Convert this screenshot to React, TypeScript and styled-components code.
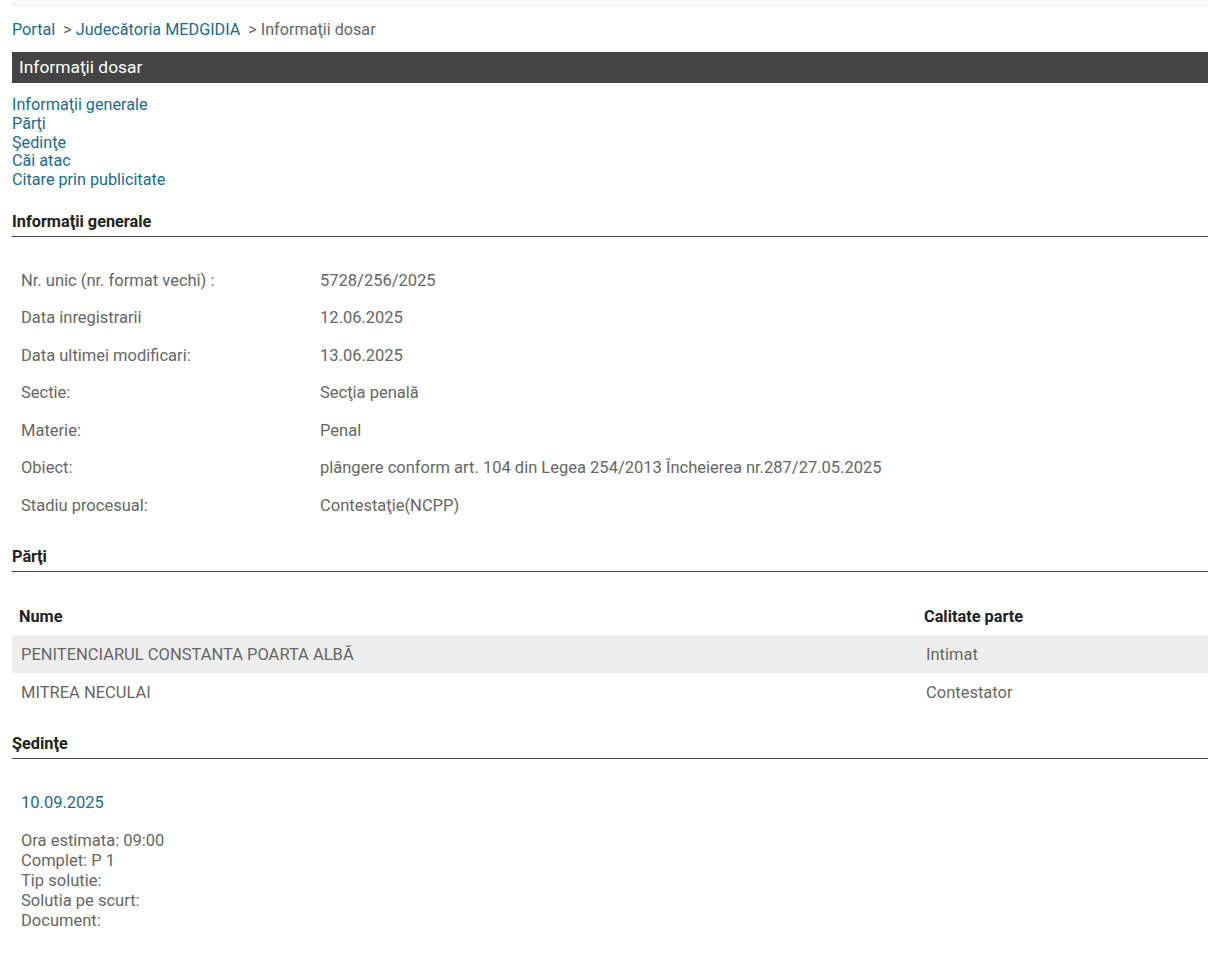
import styled, { createGlobalStyle } from 'styled-components';

const GlobalStyle = createGlobalStyle`
  body {
    margin: 0;
    background: #fff;
    font-family: Roboto, 'Liberation Sans', sans-serif;
    font-size: 16.5px;
    color: #666;
  }
`;

const Page = styled.div`
  padding: 0 12px 40px;
`;

const TopStrip = styled.div`
  height: 7px;
  background: #f7f7f7;
`;

const Breadcrumb = styled.div`
  margin-top: 13px;
  font-size: 16.2px;
  line-height: 19px;
  color: #666;
`;

const Link = styled.a`
  color: #1d6a8d;
  text-decoration: none;
`;

const Sep = styled.span`
  margin-left: 8px;
  margin-right: 4px;
`;

const HeaderBar = styled.div`
  margin-top: 13px;
  height: 31px;
  background: #444;
  color: #fff;
  font-size: 17.4px;
  line-height: 31px;
  padding: 0 7px;
`;

const NavList = styled.div`
  margin-top: 13px;
  display: flex;
  flex-direction: column;
  font-size: 16.2px;
  line-height: 18.75px;
`;

const SectionTitle = styled.div<{ $top: number }>`
  margin-top: ${(p) => p.$top}px;
  font-weight: 700;
  font-size: 16.3px;
  color: #222;
  line-height: 18px;
  padding-bottom: 5px;
  border-bottom: 1px solid #444;
`;

const InfoTable = styled.div`
  margin-top: 25px;
  display: grid;
  grid-template-columns: 299px 1fr;
`;

const InfoCell = styled.div`
  padding: 9px 9px;
  line-height: 19.5px;
`;

const PartiTable = styled.div`
  margin-top: 25px;
  display: flex;
  flex-direction: column;
`;

const PartiRow = styled.div<{ $shade?: boolean; $head?: boolean }>`
  display: grid;
  grid-template-columns: 905px 1fr;
  height: 38px;
  align-items: center;
  background: ${(p) => (p.$shade ? '#eeeeee' : 'transparent')};
  font-weight: ${(p) => (p.$head ? 700 : 400)};
  color: ${(p) => (p.$head ? '#222' : '#666')};
  font-size: ${(p) => (p.$head ? '16.3px' : '16.5px')};
`;

const PartiCell = styled.div<{ $head?: boolean }>`
  padding-left: ${(p) => (p.$head ? 7 : 9)}px;
`;

const Sedinta = styled.div`
  margin-top: 34px;
  padding-left: 9px;
`;

const SedintaDate = styled.div`
  color: #1d6a8d;
  line-height: 20px;
`;

const SedintaDetails = styled.div`
  margin-top: 18px;
  line-height: 20px;
`;

const info: [string, string][] = [
  ['Nr. unic (nr. format vechi) :', '5728/256/2025'],
  ['Data inregistrarii', '12.06.2025'],
  ['Data ultimei modificari:', '13.06.2025'],
  ['Sectie:', 'Secţia penală'],
  ['Materie:', 'Penal'],
  ['Obiect:', 'plângere conform art. 104 din Legea 254/2013 Încheierea nr.287/27.05.2025'],
  ['Stadiu procesual:', 'Contestaţie(NCPP)'],
];

const parti: [string, string][] = [
  ['PENITENCIARUL CONSTANTA POARTA ALBĂ', 'Intimat'],
  ['MITREA NECULAI', 'Contestator'],
];

export default function App() {
  return (
    <>
      <GlobalStyle />
      <Page>
        <TopStrip />
        <Breadcrumb>
          <Link href="#">Portal</Link>
          <Sep>&gt;</Sep>
          <Link href="#">Judecătoria MEDGIDIA</Link>
          <Sep>&gt;</Sep>
          Informaţii dosar
        </Breadcrumb>
        <HeaderBar>Informaţii dosar</HeaderBar>
        <NavList>
          <Link href="#">Informaţii generale</Link>
          <Link href="#">Părţi</Link>
          <Link href="#">Şedinţe</Link>
          <Link href="#">Căi atac</Link>
          <Link href="#">Citare prin publicitate</Link>
        </NavList>

        <SectionTitle $top={23}>Informaţii generale</SectionTitle>
        <InfoTable>
          {info.map(([k, v]) => (
            <>
              <InfoCell key={k}>{k}</InfoCell>
              <InfoCell key={k + 'v'}>{v}</InfoCell>
            </>
          ))}
        </InfoTable>

        <SectionTitle $top={24}>Părţi</SectionTitle>
        <PartiTable>
          <PartiRow $head>
            <PartiCell $head>Nume</PartiCell>
            <PartiCell $head>Calitate parte</PartiCell>
          </PartiRow>
          {parti.map(([n, c], i) => (
            <PartiRow key={n} $shade={i % 2 === 0}>
              <PartiCell>{n}</PartiCell>
              <PartiCell>{c}</PartiCell>
            </PartiRow>
          ))}
        </PartiTable>

        <SectionTitle $top={24}>Şedinţe</SectionTitle>
        <Sedinta>
          <SedintaDate>10.09.2025</SedintaDate>
          <SedintaDetails>
            Ora estimata: 09:00
            <br />
            Complet: P 1
            <br />
            Tip solutie:
            <br />
            Solutia pe scurt:
            <br />
            Document:
          </SedintaDetails>
        </Sedinta>
      </Page>
    </>
  );
}
